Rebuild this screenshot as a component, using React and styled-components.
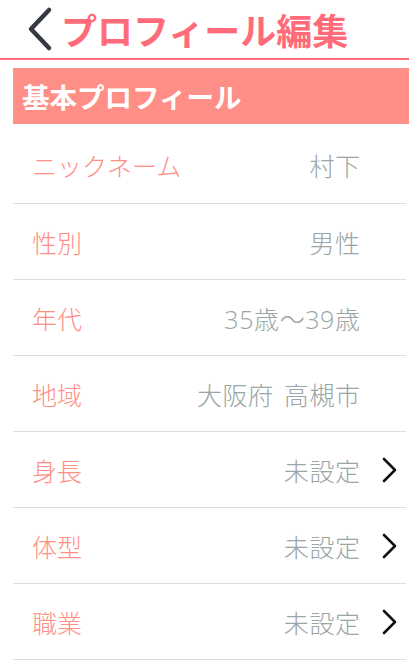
import React from "react";
import styled, { createGlobalStyle } from "styled-components";

const GlobalStyle = createGlobalStyle`
  body {
    margin: 0;
    background: #fff;
    font-family: "Noto Sans CJK JP", "Noto Sans", sans-serif;
  }
`;

const rows = [
  { label: "ニックネーム", value: "村下" },
  { label: "性別", value: "男性" },
  { label: "年代", value: "35歳〜39歳" },
  { label: "地域", value: "大阪府 高槻市" },
  { label: "身長", value: "未設定", link: true },
  { label: "体型", value: "未設定", link: true },
  { label: "職業", value: "未設定", link: true },
];

const BackIcon = () => (
  <svg width="30" height="46" viewBox="0 0 30 46">
    <polyline
      points="24,4 6,23 24,42"
      fill="none"
      stroke="#343942"
      strokeWidth="4.5"
      strokeLinecap="round"
      strokeLinejoin="round"
    />
  </svg>
);

const ChevronIcon = () => (
  <svg width="16" height="26" viewBox="0 0 16 26">
    <polyline
      points="2,2 13,13 2,24"
      fill="none"
      stroke="#111"
      strokeWidth="2.6"
      strokeLinecap="round"
      strokeLinejoin="round"
    />
  </svg>
);

const App = () => {
  return (
    <Page>
      <GlobalStyle />
      <Header>
        <BackButton>
          <BackIcon />
        </BackButton>
        <Title>プロフィール編集</Title>
      </Header>

      <Section>基本プロフィール</Section>

      <List>
        {rows.map((row, i) => (
          <Row key={row.label} first={i === 0}>
            <Label>{row.label}</Label>
            <Value>{row.value}</Value>
            <Arrow>{row.link && <ChevronIcon />}</Arrow>
          </Row>
        ))}
      </List>
    </Page>
  );
};

const Page = styled.div`
  width: 409px;
`;

const Header = styled.div`
  display: flex;
  align-items: center;
  height: 60px;
  border-bottom: 2px solid #ff6b78;
  padding-left: 25px;
  box-sizing: border-box;
`;

const BackButton = styled.div`
  display: flex;
  align-items: center;
  margin-right: 6px;
`;

const Title = styled.h1`
  margin: 0;
  font-size: 36px;
  font-weight: 700;
  color: #ff6b78;
  line-height: 1;
`;

const Section = styled.div`
  margin: 8px 0 0 13px;
  height: 56px;
  display: flex;
  align-items: center;
  padding-left: 9px;
  background: #ff8f86;
  color: #fff;
  font-size: 27.5px;
  font-weight: 700;
`;

const List = styled.div`
  margin: 0 3px 0 13px;
`;

const Row = styled.div`
  display: flex;
  align-items: center;
  height: ${(p) => (p.first ? "80px" : "76px")};
  padding-top: ${(p) => (p.first ? "2px" : "0")};
  box-sizing: border-box;
  border-bottom: 1px solid #dcdce6;
  padding-left: 19px;
`;

const Label = styled.span`
  flex: 1;
  font-size: 25px;
  font-weight: 300;
  color: #ff8f86;
`;

const Value = styled.span`
  font-family: "Open Sans", "Noto Sans CJK JP", sans-serif;
  font-size: 25px;
  font-weight: 300;
  color: #9aa5a5;
  letter-spacing: 0.6px;
  word-spacing: 3px;
  margin-right: -0.6px;
`;

const Arrow = styled.span`
  width: 46px;
  display: flex;
  align-items: center;
  padding-left: 22px;
  box-sizing: border-box;
`;

export default App;
